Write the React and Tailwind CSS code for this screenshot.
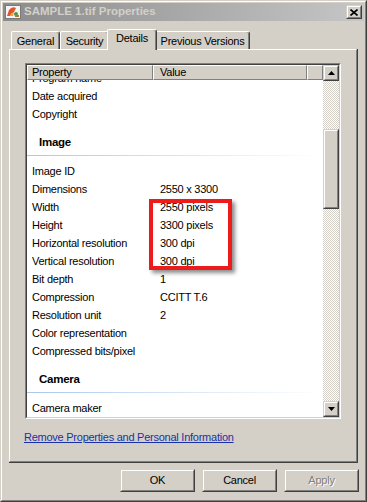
import React from 'react';

const Raised = ({ className = '', children }) => (
  <div className={`border border-t-[#d4d0c8] border-l-[#d4d0c8] border-r-[#404040] border-b-[#404040] bg-[#d4d0c8] ${className}`}>
    <div className="w-full h-full border border-t-white border-l-white border-r-[#808080] border-b-[#808080] flex items-center justify-center">
      {children}
    </div>
  </div>
);

const Arrow = ({ down = false }) => (
  <svg width="7" height="4" viewBox="0 0 7 4">
    {down ? <polygon points="0,0 7,0 3.5,4" fill="#000" /> : <polygon points="0,4 7,4 3.5,0" fill="#000" />}
  </svg>
);

const Row = ({ name, value }) => (
  <div className="flex h-[18px] items-center whitespace-nowrap">
    <div className="w-[126px] pl-[5px]">{name}</div>
    <div className="pl-[7px]">{value}</div>
  </div>
);

const Group = ({ title }) => (
  <div className="pt-[11px] pb-[6px]">
    <div className="h-[18px] flex items-center pl-[12px] font-bold text-[11.5px]">{title}</div>
    <div className="mt-[3px] h-px bg-gradient-to-r from-[#a9c7ec] via-[#d6e5f6] to-white" />
  </div>
);

const TitleIcon = () => (
  <svg width="16" height="16" viewBox="0 0 16 16">
    <rect x="0.5" y="1.5" width="15" height="13" fill="#f4f4f4" stroke="#7a7a7a" />
    <path d="M2 12 L4 6 Q7 2 11 4 L9 8 Q6 9 5 12 Z" fill="#e2542a" />
    <path d="M5 12 Q7 9 9 8 L8 12 Z" fill="#f0a030" />
    <circle cx="11" cy="10" r="2" fill="#4a9a3a" />
    <rect x="10" y="11" width="4" height="2" fill="#b07a30" />
  </svg>
);

const Tab = ({ label, width, selected }) => (
  <div
    className={`${width} ${selected ? 'h-[21px] -mb-px z-10 -mx-[2px]' : 'h-[18px]'} bg-[#d4d0c8] border-t border-l border-t-white border-l-white rounded-tl-[2px] rounded-tr-[3px] border-r border-r-[#404040] shadow-[inset_-1px_0_0_#808080] flex items-center justify-center ${selected ? 'pb-[3px]' : 'pt-[1px]'}`}
  >
    {label}
  </div>
);

export default function App() {
  const rows = [
    ['Image ID', ''],
    ['Dimensions', '2550 x 3300'],
    ['Width', '2550 pixels'],
    ['Height', '3300 pixels'],
    ['Horizontal resolution', '300 dpi'],
    ['Vertical resolution', '300 dpi'],
    ['Bit depth', '1'],
    ['Compression', 'CCITT T.6'],
    ['Resolution unit', '2'],
    ['Color representation', ''],
    ['Compressed bits/pixel', ''],
  ];

  return (
    <div className="w-[367px] h-[502px] bg-[#d4d0c8] font-['Liberation_Sans',Arial,sans-serif] text-[11px] tracking-[-0.25px] text-black border border-t-[#d4d0c8] border-l-[#d4d0c8] border-r-[#404040] border-b-[#404040]">
      <div className="w-full h-full border border-t-white border-l-white border-r-[#808080] border-b-[#808080] p-px flex flex-col">
        {/* title bar */}
        <div className="h-[18px] flex items-center bg-gradient-to-r from-[#8c8c8c] to-[#c6c6c6] pl-[2px] pr-[2px]">
          <TitleIcon />
          <div className="ml-[3px] font-bold text-[11.5px] tracking-[0px] text-[#d4d0c8]">SAMPLE 1.tif Properties</div>
          <Raised className="ml-auto w-[16px] h-[14px]">
            <svg width="8" height="7" viewBox="0 0 8 7">
              <path d="M0.5 0.5 L7.5 6.5 M7.5 0.5 L0.5 6.5" stroke="#000" strokeWidth="1.6" />
            </svg>
          </Raised>
        </div>

        {/* tabs */}
        <div className="mt-[7px] pl-[8px] flex items-end h-[21px] relative z-10">
          <Tab label="General" width="w-[49px]" />
          <Tab label="Security" width="w-[49px]" />
          <Tab label="Details" width="w-[50px]" selected />
          <Tab label="Previous Versions" width="w-[95px]" />
        </div>

        {/* panel */}
        <div className="ml-[6px] w-[349px] h-[414px] border-r border-b border-r-[#404040] border-b-[#404040]">
          <div className="w-full h-full border border-t-white border-l-white border-r-[#808080] border-b-[#808080] pl-[15px] pt-[13px] flex flex-col">
            {/* list view */}
            <div className="relative w-[316px] h-[356px] border border-t-[#808080] border-l-[#808080] border-r-white border-b-white">
              <div className="w-full h-full border border-t-[#404040] border-l-[#404040] border-r-[#d4d0c8] border-b-[#d4d0c8] bg-white flex">
                <div className="flex-1 flex flex-col overflow-hidden">
                  <div className="h-[15px] flex bg-[#d4d0c8] shrink-0 relative z-10">
                    <div className="w-[126px] border border-t-white border-l-white border-r-[#808080] border-b-[#808080] pl-[4px] flex items-center">Property</div>
                    <div className="w-[154px] border border-t-white border-l-white border-r-[#808080] border-b-[#808080] pl-[6px] flex items-center">Value</div>
                    <div className="flex-1 border border-t-white border-l-white border-r-[#808080] border-b-[#808080]" />
                  </div>
                  <div className="flex-1 overflow-hidden">
                    <div className="-mt-[11px]">
                      <Row name="Program name" value="" />
                      <Row name="Date acquired" value="" />
                      <Row name="Copyright" value="" />
                      <Group title="Image" />
                      {rows.map(([n, v]) => (
                        <Row key={n} name={n} value={v} />
                      ))}
                      <Group title="Camera" />
                      <Row name="Camera maker" value="" />
                    </div>
                  </div>
                </div>
                {/* scrollbar */}
                <div className="w-[16px] flex flex-col bg-[repeating-conic-gradient(#ffffff_0_25%,#d4d0c8_0_50%)] bg-[length:2px_2px]">
                  <Raised className="w-[16px] h-[16px] shrink-0"><Arrow /></Raised>
                  <Raised className="w-[16px] h-[80px] mt-[48px] shrink-0" />
                  <Raised className="w-[16px] h-[16px] mt-auto shrink-0"><Arrow down /></Raised>
                </div>
              </div>
              <div className="absolute left-[123px] top-[135px] w-[83px] h-[71px] border-[4px] border-[#ee1b1b] shadow-[3px_3px_4px_rgba(0,0,0,0.45)]" />
            </div>

            <div className="mt-[11px] -ml-[1px] h-[14px] flex items-center">
              <span className="text-[#1a30a8] underline underline-offset-[1px]">Remove Properties and Personal Information</span>
            </div>
          </div>
        </div>

        {/* buttons */}
        <div className="mt-[6px] flex justify-end gap-[7px] pr-[5px]">
          <Raised className="w-[75px] h-[23px]">OK</Raised>
          <Raised className="w-[75px] h-[23px]">Cancel</Raised>
          <Raised className="w-[75px] h-[23px]">
            <span className="text-[#808080] [text-shadow:1px_1px_0_#ffffff]">Apply</span>
          </Raised>
        </div>
      </div>
    </div>
  );
}
